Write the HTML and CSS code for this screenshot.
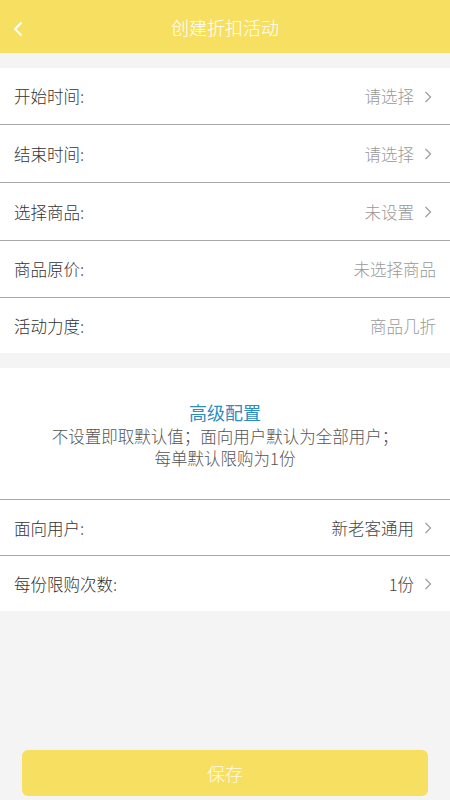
FILE: index.html
```html
<!DOCTYPE html>
<html lang="zh">
<head>
<meta charset="utf-8">
<title>创建折扣活动</title>
<link rel="stylesheet" href="styles.css">
</head>
<body>
<div class="page">
  <header class="topbar">
    <svg class="back" width="12" height="16" viewBox="0 0 12 16"><path d="M9.5 1.5 L3 8 L9.5 14.5" fill="none" stroke="#fff" stroke-width="2"/></svg>
    <div class="title">创建折扣活动</div>
  </header>

  <section class="card first">
    <div class="row"><span class="label">开始时间:</span><span class="value">请选择<svg class="chev" width="8" height="12" viewBox="0 0 8 12"><path d="M1.5 1 L6.5 6 L1.5 11" fill="none" stroke="#a0a0a0" stroke-width="1.3"/></svg></span></div>
    <div class="row"><span class="label">结束时间:</span><span class="value">请选择<svg class="chev" width="8" height="12" viewBox="0 0 8 12"><path d="M1.5 1 L6.5 6 L1.5 11" fill="none" stroke="#a0a0a0" stroke-width="1.3"/></svg></span></div>
    <div class="row"><span class="label">选择商品:</span><span class="value">未设置<svg class="chev" width="8" height="12" viewBox="0 0 8 12"><path d="M1.5 1 L6.5 6 L1.5 11" fill="none" stroke="#a0a0a0" stroke-width="1.3"/></svg></span></div>
    <div class="row"><span class="label">商品原价:</span><span class="value">未选择商品</span></div>
    <div class="row"><span class="label">活动力度:</span><span class="value">商品几折</span></div>
  </section>

  <section class="card second">
    <div class="info">
      <div class="info-title">高级配置</div>
      <div class="info-text">不设置即取默认值；面向用户默认为全部用户；</div>
      <div class="info-text">每单默认限购为1份</div>
    </div>
    <div class="row"><span class="label">面向用户:</span><span class="value dark">新老客通用<svg class="chev" width="8" height="12" viewBox="0 0 8 12"><path d="M1.5 1 L6.5 6 L1.5 11" fill="none" stroke="#a0a0a0" stroke-width="1.3"/></svg></span></div>
    <div class="row"><span class="label">每份限购次数:</span><span class="value dark">1份<svg class="chev" width="8" height="12" viewBox="0 0 8 12"><path d="M1.5 1 L6.5 6 L1.5 11" fill="none" stroke="#a0a0a0" stroke-width="1.3"/></svg></span></div>
  </section>

  <div class="spacer"></div>
  <div class="footer">
    <button class="save">保存</button>
  </div>
</div>
</body>
</html>
```

FILE: styles.css
```css
* { box-sizing: border-box; }
html, body {
  margin: 0;
  padding: 0;
  background: #f4f4f4;
  font-family: "Noto Sans CJK SC", "Noto Sans", sans-serif;
}
.page {
  width: 450px;
  height: 800px;
  display: flex;
  flex-direction: column;
}
.topbar {
  height: 53px;
  background: #f7df62;
  display: flex;
  align-items: center;
  justify-content: center;
  position: relative;
}
.back {
  position: absolute;
  left: 12px;
  top: 21px;
}
.title {
  color: #fff;
  font-size: 18px;
  font-weight: 300;
}
.card {
  background: #fff;
  display: flex;
  flex-direction: column;
}
.card.first { margin-top: 15px; }
.card.second { margin-top: 15px; }
.row {
  height: 57px;
  padding: 0 18px 0 14px;
  display: flex;
  align-items: center;
  justify-content: space-between;
  border-top: 1px solid #a8a8a8;
  font-size: 16.5px;
  font-weight: 300;
}
.card.first .row:nth-child(1) { border-top: none; height: 56px; }
.card.first .row:nth-child(2),
.card.first .row:nth-child(3) { height: 58px; }
.card.first .row:nth-child(4) { height: 57px; }
.card.first .row:nth-child(5) { height: 56px; }
.label { color: #333; }
.value {
  color: #999;
  display: flex;
  align-items: center;
}
.card.first .row:nth-child(4) .value,
.card.first .row:nth-child(5) .value { margin-right: -4px; }
.value.dark { color: #444; }
.chev { margin-left: 10px; margin-top: 1px; }
.info {
  height: 131px;
  display: flex;
  flex-direction: column;
  align-items: center;
  justify-content: center;
  padding-top: 2px;
}
.info-title {
  color: #2a8ec3;
  font-size: 18px;
  line-height: 25px;
}
.info-text {
  color: #555;
  font-size: 16.5px;
  line-height: 22px;
  font-weight: 300;
}
.card.second .row { height: 56px; }
.spacer { flex: 1; }
.footer {
  padding: 0 22px 4px 22px;
}
.save {
  width: 100%;
  height: 46px;
  border: none;
  border-radius: 6px;
  background: #f7df62;
  color: #fffbe6;
  font-size: 18px;
  font-weight: 300;
  font-family: "Noto Sans CJK SC", "Noto Sans", sans-serif;
}
```
